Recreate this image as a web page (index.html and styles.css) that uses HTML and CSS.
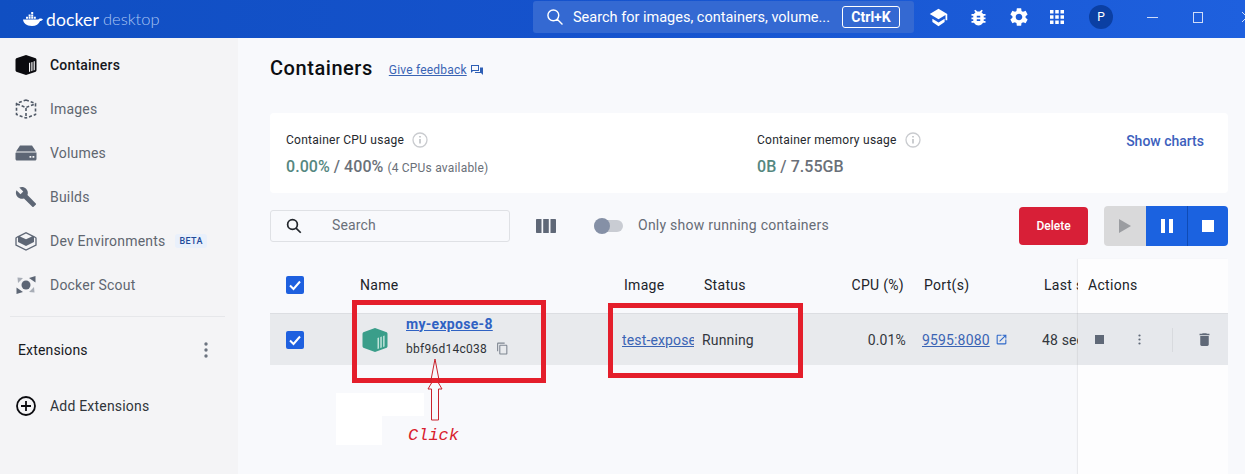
FILE: index.html
```html
<!DOCTYPE html>
<html lang="en">
<head>
<meta charset="utf-8">
<title>Docker Desktop</title>
<link rel="stylesheet" href="styles.css">
</head>
<body>
<header class="topbar">
  <div class="brand">
    <svg class="whale" viewBox="0 0 20 14" width="20" height="14"><path fill="#fff" d="M0 7.600h15.200c.6-.9 2-1.400 3-1.100l1.800.7c-.7 1.300-1.700 1.700-2.900 1.800C15.900 12 13 14 9 14c-6 0-8.600-3-9-6.400z"/><path fill="#fff" d="M3 4.800h2v2H3zM5.600 4.800h2v2h-2zM8.200 4.800h2v2h-2zM10.800 4.800h2v2h-2zM5.600 2.400h2v2h-2zM8.200 2.400h2v2h-2zM8.200 0h2v2h-2z"/></svg>
    <span class="brand-a">docker</span><span class="brand-b">desktop</span>
  </div>
  <div class="global-search">
    <svg class="gs-icon" viewBox="0 0 24 24" width="20" height="20"><path fill="none" stroke="#fff" stroke-width="1.700" d="M10 3.500a6.500 6.500 0 1 0 0 13 6.500 6.500 0 0 0 0-13zM14.700 14.700 21 21"/></svg>
    <span class="gs-text">Search for images, containers, volume...</span>
    <span class="kbd">Ctrl+K</span>
  </div>
  <div class="top-icons">
    <svg viewBox="0 0 24 24" width="21" height="21"><path fill="#fff" d="M12 2 2 8l10 6 8-4.800V15h2V8zM5 13.500v3.700L12 22l7-4.800v-3.700L12 17.800z"/></svg>
    <svg viewBox="0 0 24 24" width="21" height="21"><path fill="#fff" d="M20 8h-2.810c-.45-.78-1.070-1.450-1.820-1.960L17 4.410 15.590 3l-2.170 2.170C12.960 5.060 12.490 5 12 5c-.49 0-.96.06-1.410.17L8.410 3 7 4.410l1.620 1.630C7.880 6.550 7.260 7.220 6.810 8H4v2h2.090c-.05.33-.09.66-.09 1v1H4v2h2v1c0 .34.04.67.09 1H4v2h2.810c1.040 1.790 2.970 3 5.190 3s4.150-1.210 5.190-3H20v-2h-2.090c.05-.33.09-.66.09-1v-1h2v-2h-2v-1c0-.34-.04-.67-.09-1H20V8zm-6 8h-4v-2h4v2zm0-4h-4v-2h4v2z"/></svg>
    <svg viewBox="0 0 24 24" width="22" height="22"><path fill="#fff" d="M19.140 12.940c.04-.3.06-.61.06-.94 0-.32-.02-.64-.07-.94l2.030-1.580c.18-.14.23-.41.12-.61l-1.920-3.320c-.12-.22-.37-.29-.59-.22l-2.390.96c-.5-.38-1.030-.7-1.620-.94l-.36-2.540c-.04-.24-.24-.41-.48-.41h-3.840c-.24 0-.43.17-.47.41l-.36 2.540c-.59.24-1.130.57-1.620.94l-2.390-.96c-.22-.08-.47 0-.59.22L2.740 8.870c-.12.21-.08.47.12.61l2.030 1.580c-.05.3-.09.63-.09.94s.02.64.07.94l-2.030 1.580c-.18.14-.23.41-.12.61l1.920 3.320c.12.22.37.29.59.22l2.390-.96c.5.38 1.030.7 1.620.94l.36 2.540c.05.24.24.41.48.41h3.840c.24 0 .44-.17.47-.41l.36-2.540c.59-.24 1.130-.56 1.620-.94l2.390.96c.22.08.47 0 .59-.22l1.920-3.320c.12-.22.07-.47-.12-.61l-2.010-1.580zM12 15.600c-1.980 0-3.600-1.620-3.600-3.600s1.620-3.600 3.600-3.600 3.600 1.620 3.600 3.600-1.620 3.600-3.600 3.600z"/></svg>
    <svg class="grid-icon" viewBox="0 0 14 14" width="14" height="14"><path fill="#fff" d="M0 0h3.500v3.500H0zM5.250 0h3.500v3.500h-3.500zM10.500 0H14v3.500h-3.500zM0 5.250h3.500v3.500H0zM5.250 5.250h3.500v3.500h-3.500zM10.500 5.250H14v3.500h-3.500zM0 10.500h3.500V14H0zM5.250 10.500h3.500V14h-3.500zM10.500 10.500H14V14h-3.500z"/></svg>
    <span class="avatar">P</span>
  </div>
  <div class="window-controls">
    <span class="wc-min"></span>
    <span class="wc-max"></span>
    <svg class="wc-close" viewBox="0 0 12 12" width="12" height="12"><path stroke="#cfdcf8" fill="none" d="M1 1l10 10M11 1 1 11"/></svg>
  </div>
</header>

<div class="shell">
  <aside class="sidebar">
    <nav class="nav">
      <a class="nav-item active">
        <svg class="nav-icon" viewBox="0 0 22 20"><path fill="#0b0b0f" fill-rule="evenodd" d="M11 0l9 3c1 .4 1.500 1 1.500 2v10c0 1-.5 1.600-1.500 2l-9 3-9-3c-1-.4-1.500-1-1.500-2V5c0-1 .5-1.600 1.500-2zM14 8v9l1.200-.4V7.600zM16.300 7.300v8.900l1.200-.4V6.900zM18.600 6.500v8.900l1.200-.4V6.100z"/></svg>
        <span>Containers</span>
      </a>
      <a class="nav-item">
        <svg class="nav-icon" viewBox="0 0 22 20"><path fill="none" stroke="#4f5866" stroke-width="1.600" stroke-dasharray="3 2" d="M11 1l9.500 3.500v11L11 19l-9.500-3.500v-11zM2 5l9 3.500L20 5M11 9v9"/></svg>
        <span>Images</span>
      </a>
      <a class="nav-item">
        <svg class="nav-icon" viewBox="0 0 22 20"><path fill="#5d6675" fill-rule="evenodd" d="M5 2.500h12l4 6H1zM1 9.500h20.500V16c0 .8-.7 1.500-1.500 1.500H2c-.8 0-1.500-.7-1.500-1.500V10zM14.500 13v1.800h1.800V13zM17.500 13v1.800h1.800V13z"/></svg>
        <span>Volumes</span>
      </a>
      <a class="nav-item">
        <svg class="nav-icon" viewBox="0 0 24 24"><path fill="#5d6675" d="M22.700 19l-9.100-9.100c.9-2.300.4-5-1.500-6.900-2-2-5-2.400-7.400-1.300L9 6 6 9 1.600 4.700C.4 7.100.9 10.100 2.900 12.100c1.900 1.900 4.600 2.400 6.900 1.500l9.100 9.100c.4.4 1 .4 1.400 0l2.300-2.300c.5-.4.5-1.100.1-1.400z"/></svg>
        <span>Builds</span>
      </a>
      <a class="nav-item">
        <svg class="nav-icon" viewBox="0 0 22 20"><path fill="none" stroke="#5d6675" stroke-width="1.300" d="M3 5.500 1 7v7l10 5 10-5V7l-2-1.500"/><path fill="#5d6675" d="M11 1l8 4v6l-8 4-8-4V5zM11 2.500 5 5.400l6 2.900 6-2.900z"/></svg>
        <span>Dev Environments</span>
        <span class="beta">BETA</span>
      </a>
      <a class="nav-item">
        <svg class="nav-icon" viewBox="0 0 22 20"><circle cx="11" cy="10" r="4.500" fill="#5d6675"/><path fill="#5d6675" d="M20.500 1v6.500L14 3zM1.500 19v-6.500L8 17z"/><path fill="#a8adb6" d="M2.500 2.500 8 3 3 8zM19.500 17.500 14 17l5-5z"/></svg>
        <span>Docker Scout</span>
      </a>
    </nav>
    <div class="ext-head">
      <span>Extensions</span>
      <svg viewBox="0 0 4 16" width="4" height="16"><circle cx="2" cy="2" r="1.700" fill="#6c7480"/><circle cx="2" cy="8" r="1.700" fill="#6c7480"/><circle cx="2" cy="14" r="1.700" fill="#6c7480"/></svg>
    </div>
    <a class="nav-item add-ext">
      <svg class="nav-icon" viewBox="0 0 22 20"><circle cx="11" cy="10" r="9" fill="none" stroke="#0b0b0f" stroke-width="1.800"/><path stroke="#0b0b0f" stroke-width="1.800" d="M11 5v10M6 10h10"/></svg>
      <span>Add Extensions</span>
    </a>
  </aside>

  <main class="main">
    <div class="title-row">
      <h1>Containers</h1>
      <a class="feedback">Give feedback</a>
      <svg viewBox="0 0 12 10" width="12" height="10"><path fill="#2e5fb5" d="M0 0h8v6H2L0 8zM1 1v4h6V1z"/><path fill="#2e5fb5" d="M9 2.500h3V10l-2-2H4V7h5z"/></svg>
    </div>

    <section class="stats">
      <div class="stat stat-cpu">
        <div class="stat-label">Container CPU usage <svg class="info" viewBox="0 0 16 16" width="16" height="16"><circle cx="8" cy="8" r="7" fill="none" stroke="#c9cbcf" stroke-width="1.300"/><path stroke="#b5b8bd" stroke-width="1.400" d="M8 7v4.500M8 4v1.500"/></svg></div>
        <div class="stat-value"><span class="green">0.00%</span> / 400% <small>(4 CPUs available)</small></div>
      </div>
      <div class="stat stat-mem">
        <div class="stat-label">Container memory usage <svg class="info" viewBox="0 0 16 16" width="16" height="16"><circle cx="8" cy="8" r="7" fill="none" stroke="#c9cbcf" stroke-width="1.300"/><path stroke="#b5b8bd" stroke-width="1.400" d="M8 7v4.500M8 4v1.500"/></svg></div>
        <div class="stat-value"><span class="green">0B</span> / 7.55GB</div>
      </div>
      <a class="show-charts">Show charts</a>
    </section>

    <section class="toolbar">
      <div class="search">
        <svg viewBox="0 0 24 24" width="18" height="18"><path fill="none" stroke="#22262c" stroke-width="2.300" d="M10 3.500a6.500 6.500 0 1 0 0 13 6.500 6.500 0 0 0 0-13zM14.700 14.700 21 21"/></svg>
        <span class="search-text">Search</span>
      </div>
      <svg class="cols" viewBox="0 0 20 14" width="20" height="14"><path fill="#5f6877" d="M1 0h4.500v14H1c-.6 0-1-.4-1-1V1c0-.6.4-1 1-1zM7.200 0h5.600v14H7.200zM14.500 0H19c.6 0 1 .4 1 1v12c0 .6-.4 1-1 1h-4.500z"/></svg>
      <div class="toggle"><span class="knob"></span></div>
      <span class="toggle-label">Only show running containers</span>
      <button class="delete">Delete</button>
      <div class="actions-group">
        <span class="ag ag-play"><svg viewBox="0 0 12 14" width="12" height="14"><path fill="#9b9da1" d="M0 0l12 7-12 7z"/></svg></span>
        <span class="ag ag-pause"><svg viewBox="0 0 12 14" width="12" height="14"><path fill="#fff" d="M0 0h4v14H0zM8 0h4v14H8z"/></svg></span>
        <span class="ag ag-stop"><svg viewBox="0 0 12 12" width="12" height="12"><path fill="#fff" d="M0 0h12v12H0z"/></svg></span>
      </div>
    </section>

    <section class="table">
      <div class="row head">
        <span class="c-check"><span class="checkbox"><svg viewBox="0 0 18 18" width="18" height="18"><path fill="none" stroke="#fff" stroke-width="2" d="M4 9.500l3.500 3.500L14 5.500"/></svg></span></span>
        <span class="c-name">Name</span>
        <span class="c-image">Image</span>
        <span class="c-status">Status</span>
        <span class="c-cpu">CPU (%)</span>
        <span class="c-port">Port(s)</span>
        <span class="c-last">Last started</span>
      </div>
      <div class="row body">
        <span class="c-check"><span class="checkbox"><svg viewBox="0 0 18 18" width="18" height="18"><path fill="none" stroke="#fff" stroke-width="2" d="M4 9.500l3.500 3.500L14 5.500"/></svg></span></span>
        <span class="c-name name-cell">
          <svg class="c-icon" viewBox="0 0 26 24"><path fill="#3a9e8a" d="M13 0l11 4c1 .4 1.500 1 1.500 2v12c0 1-.5 1.600-1.500 2l-11 4-11-4c-1-.4-1.500-1-1.500-2V6c0-1 .5-1.600 1.500-2z"/><path fill="#bfe3da" d="M15.500 10v11l1.500-.5V9.500zM18.300 9v11l1.500-.5V8.500zM21.100 8v11l1.500-.5V7.500z"/></svg>
          <span class="name-text">
            <a class="c-link">my-expose-8</a>
            <span class="c-id">bbf96d14c038 <svg viewBox="0 0 24 24" width="13" height="13"><path fill="#7f8792" d="M16 1H4c-1.100 0-2 .9-2 2v14h2V3h12V1zm3 4H8c-1.100 0-2 .9-2 2v14c0 1.100.9 2 2 2h11c1.100 0 2-.9 2-2V7c0-1.100-.9-2-2-2zm0 16H8V7h11v14z"/></svg></span>
          </span>
        </span>
        <span class="c-image cell-image"><a>test-expose</a></span>
        <span class="c-status cell-status">Running</span>
        <span class="c-cpu cell-cpu">0.01%</span>
        <span class="c-port cell-port"><a>9595:8080</a><svg viewBox="0 0 24 24" width="13" height="13"><path fill="#2e68c9" d="M19 19H5V5h7V3H5c-1.110 0-2 .9-2 2v14c0 1.100.89 2 2 2h14c1.100 0 2-.9 2-2v-7h-2v7zM14 3v2h3.590l-9.830 9.830 1.410 1.410L19 6.410V10h2V3h-7z"/></svg></span>
        <span class="c-last cell-last">48 seconds ago</span>
      </div>
      <div class="actions-col">
        <div class="ac-head">Actions</div>
        <div class="ac-row">
          <svg viewBox="0 0 9 9" width="9" height="9"><path fill="#5f6877" d="M0 0h9v9H0z"/></svg>
          <svg class="ac-more" viewBox="0 0 3 11" width="3" height="11"><circle cx="1.500" cy="1.500" r="1.100" fill="#5f6877"/><circle cx="1.500" cy="5.500" r="1.100" fill="#5f6877"/><circle cx="1.500" cy="9.500" r="1.100" fill="#5f6877"/></svg>
          <span class="ac-sep"></span>
          <svg viewBox="0 0 24 24" width="17" height="17"><path fill="#5f6877" d="M6 19c0 1.100.9 2 2 2h8c1.100 0 2-.9 2-2V7H6v12zM19 4h-3.500l-1-1h-5l-1 1H5v2h14V4z"/></svg>
        </div>
      </div>
    </section>
  </main>
</div>

<div class="patch patch-a"></div>
<div class="patch patch-b"></div>
<div class="mark mark-name"></div>
<div class="mark mark-image"></div>
<svg class="arrow" viewBox="0 0 16 64" width="16" height="64"><path fill="none" stroke="#c8222c" stroke-width="1" d="M8 1l4.500 23.500-1 .5 3.500 6h-3.500V62H4.500V31H1l3.500-6-1-.5z"/></svg>
<span class="click">Click</span>
</body>
</html>
```
FILE: styles.css
```css
* { box-sizing: border-box; }
html, body { margin: 0; padding: 0; }
body {
  width: 1245px;
  height: 474px;
  overflow: hidden;
  position: relative;
  font-family: Roboto, "Liberation Sans", sans-serif;
  font-size: 14px;
  color: #17191e;
  background: #f8f9fc;
  letter-spacing: .15px;
}
a { color: inherit; }
svg { display: block; flex: none; }

/* top bar */
.topbar {
  height: 38px;
  display: flex;
  align-items: center;
  overflow: hidden;
  background: linear-gradient(90deg, #104fc2 0%, #1552cc 45%, #1e60de 100%);
  color: #fff;
}
.brand { display: flex; align-items: center; flex: none; width: 533px; padding-left: 23px; }
.whale { margin-right: 3px; }
.brand-a { font: 400 17.500px Lato, sans-serif; margin-right: 4px; }
.brand-b { font: 300 16.500px Lato, sans-serif; color: #a9c4f3; letter-spacing: 0; }
.global-search {
  flex: none;
  width: 381px;
  height: 32px;
  margin-top: -4px;
  display: flex;
  align-items: center;
  padding-left: 12px;
  background: #3469d2;
  border-radius: 3px;
}
.gs-icon { margin-right: 8px; }
.gs-text { font-size: 14.500px; letter-spacing: 0; white-space: nowrap; width: 260px; }
.kbd {
  border: 1px solid #fff;
  border-radius: 3px;
  height: 22px;
  width: 58px;
  text-align: center;
  line-height: 20px;
  font-weight: 700;
  font-size: 14px;
  letter-spacing: 0;
  margin-left: 9px;
}
.top-icons { flex: none; display: flex; align-items: center; gap: 19px; margin-left: 14px; margin-top: -4px; }
.grid-icon { margin-left: 1px; }
.avatar {
  width: 24px; height: 24px; border-radius: 50%;
  background: #0b3fa3; text-align: center; line-height: 24px;
  font-size: 12px; margin-left: 6px;
}
.window-controls { flex: none; display: flex; align-items: center; gap: 35px; margin-left: 34px; margin-top: -4px; }
.wc-min { width: 11px; height: 1px; background: #cfdcf8; }
.wc-max { width: 10px; height: 11px; border: 1px solid #cfdcf8; }
.wc-close { margin-left: 3px; }

/* shell */
.shell { display: flex; height: 436px; }
.sidebar { width: 238px; background: #f4f4f6; padding: 5px 0 0 0; flex: none; }
.nav { border-bottom: 1px solid #e6e7ea; margin: 0 13px 0 10px; padding-bottom: 9px; }
.nav-item {
  height: 44px;
  display: flex;
  align-items: center;
  color: #5f6670;
  font-size: 14px;
  letter-spacing: .2px;
}
.nav-icon { width: 22px; height: 22px; margin: 0 13px 0 5px; }
.nav-item.active { color: #15171c; font-weight: 500; }
.beta {
  margin-left: 10px;
  background: #e9f0fb;
  color: #1f4a9a;
  font-size: 9px;
  font-weight: 500;
  letter-spacing: .4px;
  padding: 2px 4px;
  border-radius: 3px;
}
.ext-head {
  display: flex;
  justify-content: space-between;
  align-items: center;
  height: 20px;
  margin: 23px 30px 0 18px;
  color: #17191e;
}
.add-ext { margin: 24px 0 0 10px; color: #30343a; }

/* main */
.main { flex: 1; padding: 17px 17px 0 32px; position: relative; min-width: 0; }
.title-row { display: flex; align-items: center; height: 26px; gap: 4px; }
h1 { margin: 0 12px 0 0; font-size: 20px; font-weight: 500; color: #0c0e12; letter-spacing: .55px; }
.feedback { font-size: 12px; color: #3a64b4; text-decoration: underline; margin-top: 4px; letter-spacing: .2px; }
.title-row svg { margin-top: 4px; }

.stats {
  margin-top: 32px;
  height: 80px;
  background: #fff;
  border-radius: 4px;
  display: flex;
  padding: 19px 24px 0 16px;
}
.stat-cpu { width: 471px; }
.stat-mem { flex: 1; }
.stat-label { display: flex; align-items: center; gap: 8px; font-size: 12px; height: 16px; color: #25282d; letter-spacing: .25px; }
.stat-value { margin-top: 9px; font-size: 16px; font-weight: 500; color: #6a7079; letter-spacing: .05px; white-space: nowrap; }
.stat-value small { font-size: 12px; font-weight: 400; letter-spacing: .2px; }
.green { color: #55877f; }
.show-charts { color: #3d5fbd; font-weight: 500; font-size: 14px; margin-top: 1px; letter-spacing: 0; }

.toolbar { display: flex; align-items: center; margin-top: 13px; height: 40px; }
.search {
  width: 240px;
  height: 32px;
  border: 1px solid #dfe1e5;
  border-radius: 3px;
  display: flex;
  align-items: center;
  padding-left: 14px;
  gap: 29px;
  color: #6a7079;
}
.search-text { margin-top: -2px; }
.cols { margin-left: 26px; }
.toggle { width: 29px; height: 12px; background: #c9ccd3; border-radius: 6px; margin-left: 38px; position: relative; }
.knob { position: absolute; left: 0; top: -2px; width: 16px; height: 16px; border-radius: 50%; background: #8590a6; }
.toggle-label { margin: -2px 0 0 15px; color: #666c76; letter-spacing: .25px; }
.delete {
  margin-left: auto;
  width: 69px;
  height: 38px;
  background: #d81f37;
  color: #fff;
  border: 0;
  border-radius: 4px;
  font: 500 12px Roboto, sans-serif;
}
.actions-group { display: flex; height: 40px; margin-left: 16px; border-radius: 4px; overflow: hidden; }
.ag { display: flex; align-items: center; justify-content: center; height: 100%; }
.ag-play { width: 42px; background: #d9d9da; }
.ag-pause { width: 41px; background: #1b62e0; }
.ag-stop { width: 41px; background: #1b62e0; border-left: 1px solid #0f4bb5; }

.table { position: relative; margin-top: 13px; }
.row { display: grid; grid-template-columns: 90px 264px 80px 127px 73px 140px 1fr; align-items: center; }
.row.head { height: 54px; padding-bottom: 2px; color: #202329; letter-spacing: .3px; }
.row.body { height: 52px; background: #e8eaed; border-top: 1px solid #dcdee2; color: #33373d; white-space: nowrap; overflow: hidden; }
.c-check { padding-left: 16px; }
.checkbox { display: block; width: 18px; height: 18px; background: #1e60df; border-radius: 2px; }
.cell-image { margin-left: -2px; width: 72px; overflow: hidden; color: #3a64b4; }
.cell-image a { text-decoration: underline; }
.cell-status { margin-left: -2px; }
.c-cpu { text-align: right; }
.cell-cpu { margin-right: -2px; }
.c-port { padding-left: 20px; }
.cell-port { display: flex; align-items: center; gap: 5px; color: #3a64b4; margin-left: -2px; }
.cell-port a { text-decoration: underline; }
.c-last { display: block; width: 34px; overflow: hidden; white-space: nowrap; }
.cell-last { margin-left: -2px; width: 36px; }
.name-cell { display: flex; align-items: center; gap: 18px; margin-left: 2px; }
.c-icon { width: 26px; height: 24px; }
.name-text { display: flex; flex-direction: column; gap: 10px; margin-bottom: 8px; }
.c-link { color: #2f62c3; font-weight: 700; text-decoration: underline; letter-spacing: .3px; }
.c-id { display: flex; align-items: center; gap: 9px; font-size: 12px; color: #2f3338; letter-spacing: .25px; }

.actions-col { position: absolute; top: 0; right: 0; width: 150px; height: 215px; background: #fdfdfe; box-shadow: -1px 0 1px rgba(0,0,0,.06); }
.ac-head { height: 54px; line-height: 52px; padding-left: 10px; color: #202329; letter-spacing: .3px; }
.ac-row {
  height: 52px;
  background: #e6e8ec;
  border-top: 1px solid #dcdee2;
  display: flex;
  align-items: center;
  padding-left: 17px;
}
.ac-more { margin-left: 34px; }
.ac-sep { width: 1px; height: 24px; background: #d8dade; margin: 0 23px 0 31px; }

/* annotations drawn over the screenshot */
.patch { position: absolute; background: #fff; }
.patch-a { left: 336px; top: 393px; width: 46px; height: 52px; }
.patch-b { left: 382px; top: 393px; width: 42px; height: 23px; }
.mark { position: absolute; border: 5px solid #e41e2b; }
.mark-name { left: 352px; top: 300px; width: 194px; height: 83px; }
.mark-image { left: 608px; top: 303px; width: 195px; height: 75px; }
.arrow { position: absolute; left: 427px; top: 358px; }
.click { position: absolute; left: 408px; top: 426px; font: italic 400 17px "Liberation Mono", monospace; color: #d8202c; letter-spacing: 0; }
```
